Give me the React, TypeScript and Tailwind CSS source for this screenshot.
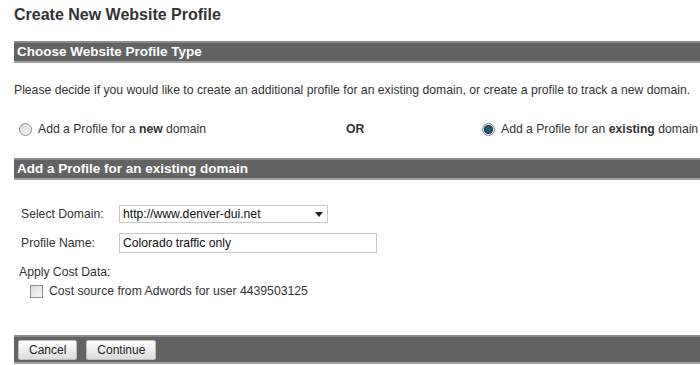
import React from "react";

const Bar = ({ children, className = "" }: { children?: React.ReactNode; className?: string }) => (
  <div
    className={`bg-[#636363] border-t-2 border-b-2 border-t-[#8a8a8a] border-b-[#a0a0a0] text-white font-bold text-[13.5px] leading-[17px] pl-[3px] ${className}`}
  >
    {children}
  </div>
);

const Radio = ({ checked }: { checked?: boolean }) => (
  <span className="inline-flex items-center justify-center w-[13px] h-[13px] rounded-full border border-[#8f8f8f] bg-gradient-to-br from-[#d8d8d8] to-[#f6f6f6]">
    {checked && <span className="w-[7px] h-[7px] rounded-full bg-[#1d5c7a] ring-1 ring-[#0d2f40]" />}
  </span>
);

const Button = ({ text }: { text: string }) => (
  <button className="h-[20px] px-[10px] border border-[#bdbdbd] rounded-[2px] bg-gradient-to-b from-white to-[#dcdcdc] text-[12px] text-[#222] leading-none">
    {text}
  </button>
);

export default function App() {
  return (
    <div className="w-[700px] h-[365px] bg-white overflow-hidden text-[#333] font-['Liberation_Sans',Arial,sans-serif]">
      <div className="pl-[14px]">
        <h1 className="pt-[5px] text-[16px] leading-[20px] font-bold text-[#333]">Create New Website Profile</h1>

        <Bar className="mt-[16px] h-[22px]">Choose Website Profile Type</Bar>

        <p className="mt-[20px] text-[12.2px] leading-[14px] whitespace-nowrap text-[#333]">
          Please decide if you would like to create an additional profile for an existing domain, or create a profile to track a new domain.
        </p>

        <div className="mt-[24px] flex items-center h-[16px] text-[12.2px] whitespace-nowrap">
          <div className="flex items-center gap-[6px] pl-[5px] w-[332px]">
            <Radio />
            <span>
              Add a Profile for a <b>new</b> domain
            </span>
          </div>
          <span className="font-bold w-[136px]">OR</span>
          <div className="flex items-center gap-[6px]">
            <Radio checked />
            <span>
              Add a Profile for an <b>existing</b> domain
            </span>
          </div>
        </div>

        <Bar className="mt-[21px] h-[22px]">Add a Profile for an existing domain</Bar>

        <div className="mt-[25px] pl-[7px] text-[12.2px]">
          <div className="flex items-center h-[18px]">
            <span className="w-[98px]">Select Domain:</span>
            <div className="w-[209px] h-[18px] border border-[#c8c8c8] flex items-center justify-between pl-[3px] pr-[4px]">
              <span className="text-[#111]">http://www.denver-dui.net</span>
              <span className="w-0 h-0 border-l-[4px] border-r-[4px] border-t-[5px] border-l-transparent border-r-transparent border-t-[#222]" />
            </div>
          </div>
          <div className="flex items-center h-[20px] mt-[10px]">
            <span className="w-[98px]">Profile Name:</span>
            <div className="w-[258px] h-[20px] border border-[#c8c8c8] flex items-center pl-[3px] text-[#111]">
              Colorado traffic only
            </div>
          </div>
        </div>

        <div className="mt-[12px] pl-[5px] text-[12.2px] leading-[14px]">Apply Cost Data:</div>
        <div className="mt-[3px] pl-[16px] flex items-center gap-[6px] text-[12.2px]">
          <span className="w-[13px] h-[13px] border border-[#8f8f8f] bg-gradient-to-br from-[#dcdcdc] to-[#f8f8f8]" />
          <span>Cost source from Adwords for user 4439503125</span>
        </div>

        <div className="mt-[35px] h-[29px] bg-[#636363] border-t-2 border-b-2 border-t-[#8a8a8a] border-b-[#a0a0a0] flex items-center gap-[9px] pl-[4px]">
          <Button text="Cancel" />
          <Button text="Continue" />
        </div>
      </div>
    </div>
  );
}
